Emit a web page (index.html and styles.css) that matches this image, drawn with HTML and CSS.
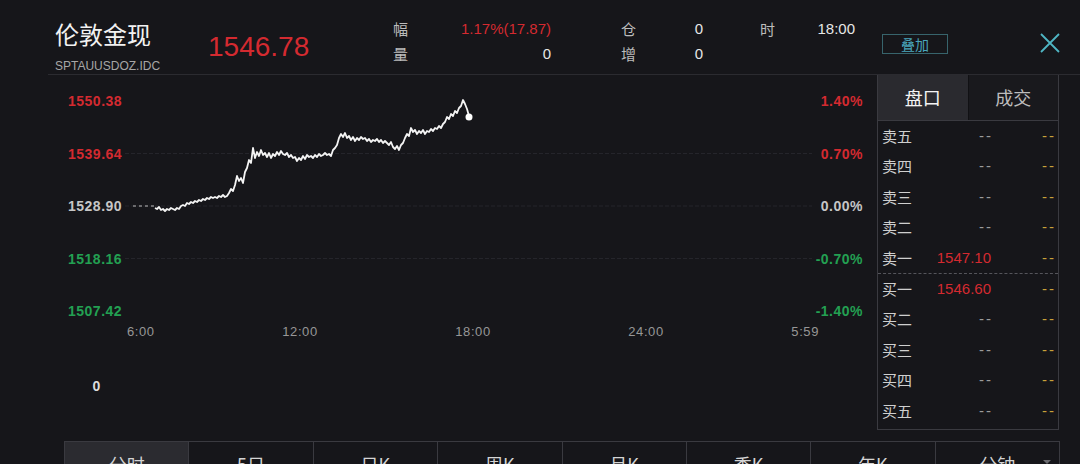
FILE: index.html
```html
<!doctype html>
<html>
	<head>
		<meta charset="utf-8"/>
		<title>伦敦金现</title>
		<link rel="stylesheet" href="styles.css">
	</head>
	<body>
		<div class="header">
			<div class="title">
				<div class="name">伦敦金现</div>
				<div class="code">SPTAUUSDOZ.IDC</div>
			</div>
			<div class="price up">1546.78</div>
			<div class="stat-col col1">
				<div class="stat"><span class="key">幅</span><span class="up">1.17%(17.87)</span></div>
				<div class="stat"><span class="key">量</span><span>0</span></div>
			</div>
			<div class="stat-col col2">
				<div class="stat"><span class="key">仓</span><span>0</span></div>
				<div class="stat"><span class="key">增</span><span>0</span></div>
			</div>
			<div class="stat-col col3">
				<div class="stat"><span class="key">时</span><span>18:00</span></div>
			</div>
			<div class="overlay-btn">叠加</div>
			<svg class="close" viewBox="0 0 20 20">
				<path d="M1 1L19 19M19 1L1 19" stroke="#4fb6c4" stroke-width="1.8" fill="none"/>
			</svg>
		</div>

		<div class="main">
			<div class="chart">
				<div class="plot-row">
					<div class="axis axis-left">
						<span class="up">1550.38</span>
						<span class="up">1539.64</span>
						<span class="flat">1528.90</span>
						<span class="down">1518.16</span>
						<span class="down">1507.42</span>
					</div>
					<svg class="plot" viewBox="125 92 687 228">
						<g stroke="#25252b" stroke-width="1" stroke-dasharray="4 2">
							<line x1="125" y1="153.5" x2="812" y2="153.5"/>
							<line x1="125" y1="206" x2="812" y2="206"/>
							<line x1="125" y1="258.5" x2="812" y2="258.5"/>
						</g>
						<line x1="133" y1="206" x2="154" y2="206" stroke="#bbb" stroke-width="1" stroke-dasharray="3 3"/>
						<polyline fill="none" stroke="#f4f4f4" stroke-width="1.8" stroke-linejoin="round"
							points="155,208 157,209 159,207 161,210 163,209 165,211 167,209 169,210 171,208 173,209 175,210 177,208 179,209 181,206 183,205 185,206 187,203 189,204 191,202 193,203 195,201 197,202 199,200 201,201 203,199 205,200 207,198 209,199 211,197 213,198 215,197 217,198 219,196 221,197 223,195 225,197 227,196 229,193 231,189 233,191 235,185 237,176 239,181 241,178 243,183 245,172 247,168 249,160 251,163 253,148 255,158 257,152 259,156 261,150 263,155 265,153 267,157 269,153 271,158 273,154 275,156 277,152 279,155 281,151 283,154 285,155 287,153 289,157 291,155 293,158 295,157 297,161 299,158 301,160 303,156 305,159 307,155 309,157 311,156 313,158 315,155 317,157 319,154 321,156 323,155 325,153 327,155 329,154 331,156 333,150 335,148 337,145 339,138 341,134 343,137 345,133 347,138 349,136 351,140 353,137 355,141 357,138 359,140 361,137 363,139 365,138 367,141 369,139 371,142 373,140 375,141 377,139 379,142 381,140 383,143 385,141 387,143 389,145 391,142 393,147 395,149 397,146 399,150 401,145 403,143 405,138 407,134 409,136 411,128 413,132 415,130 417,134 419,131 421,133 423,130 425,134 427,131 429,132 431,129 433,131 435,128 437,129 439,126 441,128 443,124 445,122 447,117 449,119 451,114 453,116 455,111 457,113 459,108 461,106 463,100 465,104 467,109 469,116"/>
						<circle cx="469" cy="117" r="3.5" fill="#fff"/>
					</svg>
					<div class="axis axis-right">
						<span class="up">1.40%</span>
						<span class="up">0.70%</span>
						<span class="flat">0.00%</span>
						<span class="down">-0.70%</span>
						<span class="down">-1.40%</span>
					</div>
				</div>
				<div class="times">
					<span class="tick first"><span>6:00</span></span>
					<span class="tick"><span>12:00</span></span>
					<span class="tick"><span>18:00</span></span>
					<span class="tick"><span>24:00</span></span>
					<span class="tick last"><span>5:59</span></span>
				</div>
				<div class="vol-label">0</div>
			</div>

			<div class="quote">
				<div class="quote-tabs">
					<div class="qtab active">盘口</div>
					<div class="qtab">成交</div>
				</div>
				<div class="book sell">
					<div class="row"><span class="lbl">卖五</span><span class="mid">--</span><span class="amt">--</span></div>
					<div class="row"><span class="lbl">卖四</span><span class="mid">--</span><span class="amt">--</span></div>
					<div class="row"><span class="lbl">卖三</span><span class="mid">--</span><span class="amt">--</span></div>
					<div class="row"><span class="lbl">卖二</span><span class="mid">--</span><span class="amt">--</span></div>
					<div class="row"><span class="lbl">卖一</span><span class="mid price-cell">1547.10</span><span class="amt">--</span></div>
				</div>
				<div class="book buy">
					<div class="row"><span class="lbl">买一</span><span class="mid price-cell">1546.60</span><span class="amt">--</span></div>
					<div class="row"><span class="lbl">买二</span><span class="mid">--</span><span class="amt">--</span></div>
					<div class="row"><span class="lbl">买三</span><span class="mid">--</span><span class="amt">--</span></div>
					<div class="row"><span class="lbl">买四</span><span class="mid">--</span><span class="amt">--</span></div>
					<div class="row"><span class="lbl">买五</span><span class="mid">--</span><span class="amt">--</span></div>
				</div>
			</div>
		</div>

		<div class="periods">
			<div class="period active">分时</div>
			<div class="period">5日</div>
			<div class="period">日K</div>
			<div class="period">周K</div>
			<div class="period">月K</div>
			<div class="period">季K</div>
			<div class="period">年K</div>
			<div class="period more">分钟</div>
		</div>
	</body>
</html>
```

FILE: styles.css
```css
*{margin:0;padding:0;box-sizing:border-box;}
body{
	width:1080px;
	height:464px;
	overflow:hidden;
	background:#16161a;
	color:#e6e6e6;
	font-family:"Liberation Sans","Noto Sans CJK SC",sans-serif;
}
.up{color:#d42a30;}
.down{color:#23a052;}
.flat{color:#c6c6c6;}

/* 顶部 */
.header{
	display:flex;
	height:75px;
	margin-left:48px;
	padding-left:7px;
	border-bottom:1px solid #2b2b30;
}
.title{width:153px;padding-top:18px;}
.name{
	font-family:"Noto Sans CJK SC",sans-serif;
	font-size:24px;
	line-height:32px;
	color:#f2f2f2;
}
.code{
	margin-top:8px;
	font-size:12px;
	line-height:16px;
	color:#a6a6a6;
}
.price{
	width:185px;
	padding-top:30px;
	font-size:28px;
	line-height:34px;
}
.stat-col{
	padding-top:16px;
	font-size:15px;
	line-height:25px;
}
.stat{display:flex;justify-content:space-between;}
.stat .key{
	font-family:"Noto Sans CJK SC",sans-serif;
	color:#bcbcbc;
}
.col1{width:158px;margin-right:70px;}
.col2{width:82px;margin-right:57px;}
.col3{width:95px;}
.overlay-btn{
	margin:34px 0 0 27px;
	width:66px;
	height:20px;
	border:1px solid #37646c;
	color:#4aa6bd;
	font-family:"Noto Sans CJK SC",sans-serif;
	font-size:14px;
	line-height:18px;
	text-align:center;
}
.close{margin:33px 0 0 92px;width:20px;height:20px;}

/* 主体 */
.main{display:flex;height:356px;}
.chart{width:877px;padding:17px 0 0 68px;}
.plot-row{display:flex;height:228px;}
.axis{
	display:flex;
	flex-direction:column;
	justify-content:space-between;
	font-size:14px;
	font-weight:bold;
	line-height:18px;
	letter-spacing:0.5px;
}
.axis-left{width:57px;}
.axis-right{width:51px;text-align:right;}
.plot{width:687px;height:228px;display:block;}
.times{
	display:flex;
	justify-content:space-between;
	width:692px;
	height:16px;
	margin:4px 0 0 59px;
	font-size:13px;
	line-height:16px;
	letter-spacing:0.6px;
	color:#979797;
}
.tick{width:0;display:flex;justify-content:center;white-space:nowrap;}
.tick.first{justify-content:flex-start;}
.tick.last{justify-content:flex-end;}
.vol-label{
	width:57px;
	margin-top:37px;
	text-align:center;
	font-size:14px;
	font-weight:bold;
	line-height:18px;
	color:#dcdcdc;
}

/* 盘口 */
.quote{
	width:182px;
	height:355px;
	border:1px solid #3a3a40;
	border-top:none;
}
.quote-tabs{display:flex;height:46px;border-bottom:1px solid #3a3a40;}
.qtab{
	flex:1;
	text-align:center;
	font-family:"Noto Sans CJK SC",sans-serif;
	font-size:18px;
	line-height:45px;
	color:#bdbdbd;
	background:#19191d;
}
.qtab + .qtab{border-left:1px solid #111114;}
.qtab.active{background:#2a2a2f;color:#f4f4f4;}
.sell{border-bottom:1px dashed #55555b;}
.row{
	display:grid;
	grid-template-columns:46px 63px 65px;
	height:30.4px;
	padding:0 2px 0 4px;
	font-size:15px;
	line-height:30.4px;
}
.lbl{font-family:"Noto Sans CJK SC",sans-serif;color:#cfcfcf;}
.mid{text-align:right;color:#9c9c9c;letter-spacing:2px;margin-right:-2px;}
.mid.price-cell{color:#d42a30;letter-spacing:0;margin-right:0;}
.amt{text-align:right;color:#c9a23a;letter-spacing:2px;}

/* 周期 */
.periods{
	display:flex;
	width:996px;
	height:40px;
	margin:10px 0 0 64px;
	border-top:1px solid #3a3a40;
	border-left:1px solid #3a3a40;
}
.period{
	flex:1;
	position:relative;
	padding-top:10px;
	border-right:1px solid #3a3a40;
	text-align:center;
	font-family:"Noto Sans CJK SC",sans-serif;
	font-size:18px;
	line-height:24px;
	color:#d4d4d4;
}
.period.active{background:#2b2b30;}
.more:after{
	content:'';
	position:absolute;
	right:8px;
	bottom:17px;
	border-left:4px solid transparent;
	border-right:4px solid transparent;
	border-top:4px solid #6a6a6f;
}
```
